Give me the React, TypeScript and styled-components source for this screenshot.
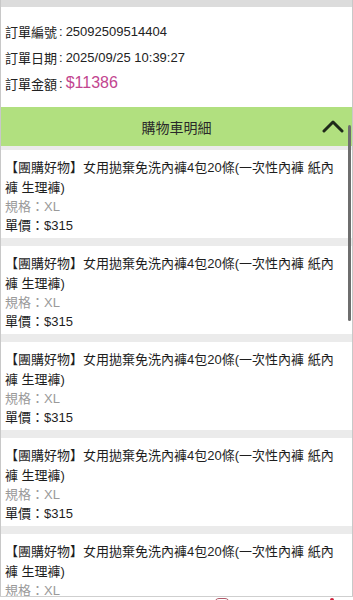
import React from 'react'
import styled, { createGlobalStyle } from 'styled-components'

const GlobalStyle = createGlobalStyle`
  html, body {
    margin: 0;
    padding: 0;
    background: #ffffff;
  }
  body {
    font-family: "Liberation Sans", "Noto Sans CJK TC", sans-serif;
    color: #222;
    -webkit-font-smoothing: antialiased;
  }
`

const Page = styled.div`
  width: 353px;
  box-sizing: border-box;
  border-left: 1px solid #c8c8c8;
  border-right: 1px solid #c8c8c8;
  background: #fff;
`

const TopBar = styled.div`
  height: 7px;
  background: #dcdcdc;
`

const OrderInfo = styled.div`
  padding: 11px 4px;
`

const InfoRow = styled.div`
  height: 26px;
  display: flex;
  align-items: center;
  font-size: 13px;
  color: #222;
`

const Colon = styled.span`
  padding: 0 3px 0 2px;
`

const Amount = styled.span`
  font-size: 16px;
  color: #c2458f;
`

const SectionHeader = styled.div`
  position: relative;
  height: 39px;
  background: #b1e07f;
  display: flex;
  align-items: center;
  justify-content: center;
  font-size: 14px;
  color: #2a2a2a;
`

const Chevron = styled.svg`
  position: absolute;
  right: 8px;
  top: 12px;
`

const ItemList = styled.div`
  display: flex;
  flex-direction: column;
  gap: 8px;
  padding-top: 4px;
  background: #ebebeb;
`

const Item = styled.div`
  background: #fff;
  height: 88px;
  box-sizing: border-box;
  padding: 8px 12px 2px 4px;
  font-size: 13px;
`

const ItemTitle = styled.div`
  line-height: 20px;
  color: #1e1e1e;
`

const Spec = styled.div`
  line-height: 18px;
  color: #9a9a9a;
`

const Price = styled.div`
  line-height: 20px;
  color: #1e1e1e;
`

const ScrollThumb = styled.div`
  position: fixed;
  right: 2px;
  top: 125px;
  width: 3px;
  height: 196px;
  border-radius: 2px;
  background: #6e6e6e;
`

const BottomNav = styled.div`
  position: fixed;
  left: 0;
  bottom: 0;
  width: 353px;
  height: 3px;
  background: #fff;
  border-top: 1px solid #cfcfcf;
  overflow: hidden;
`

const NavIcon = styled.div<{ $left: number; $dot?: boolean }>`
  position: absolute;
  top: 1px;
  left: ${({ $left }) => $left}px;
  width: ${({ $dot }) => ($dot ? 4 : 14)}px;
  height: 8px;
  border: ${({ $dot }) => ($dot ? 'none' : '1.5px solid #b05a6a')};
  background: ${({ $dot }) => ($dot ? '#d0213a' : 'transparent')};
  border-radius: 6px;
`

const items = Array.from({ length: 6 }, () => ({
  title: '【團購好物】女用拋棄免洗內褲4包20條(一次性內褲 紙內褲 生理褲)',
  spec: 'XL',
  price: 315,
}))

const App: React.FC = (): JSX.Element => (
  <>
    <GlobalStyle />
    <Page>
      <TopBar />
      <OrderInfo>
        <InfoRow>
          訂單編號<Colon>:</Colon>25092509514404
        </InfoRow>
        <InfoRow>
          訂單日期<Colon>:</Colon>2025/09/25 10:39:27
        </InfoRow>
        <InfoRow>
          訂單金額<Colon>:</Colon>
          <Amount>$11386</Amount>
        </InfoRow>
      </OrderInfo>
      <SectionHeader>
        購物車明細
        <Chevron width="22" height="14" viewBox="0 0 22 14">
          <path d="M2 12 L11 3 L20 12" fill="none" stroke="#1f2a1a" strokeWidth="3" strokeLinecap="round" strokeLinejoin="round" />
        </Chevron>
      </SectionHeader>
      <ItemList>
        {items.map((it, i) => (
          <Item key={i}>
            <ItemTitle>{it.title}</ItemTitle>
            <Spec>規格：{it.spec}</Spec>
            <Price>單價：${it.price}</Price>
          </Item>
        ))}
      </ItemList>
    </Page>
    <ScrollThumb />
    <BottomNav>
      <NavIcon $left={214} />
      <NavIcon $left={330} $dot />
    </BottomNav>
  </>
)

export default App
